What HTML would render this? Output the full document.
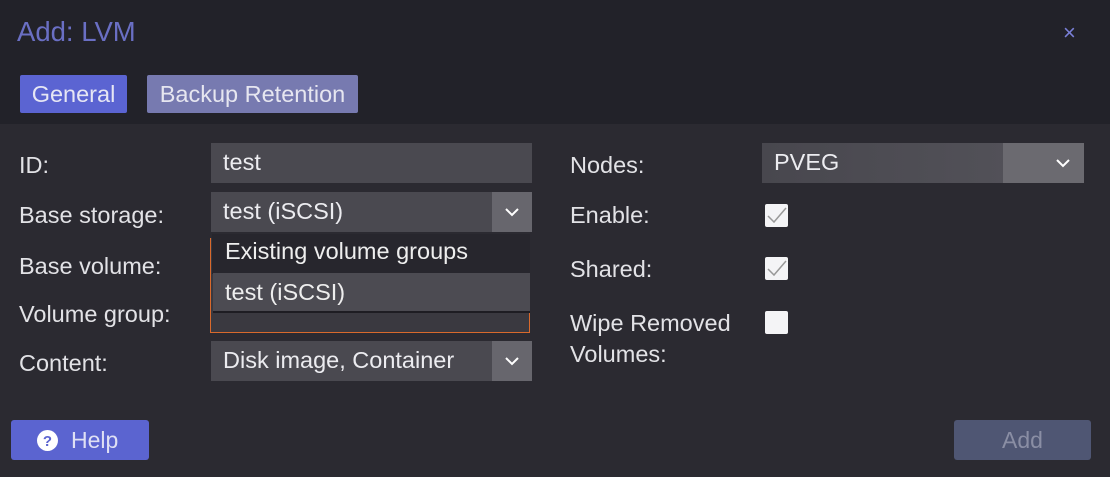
<!DOCTYPE html>
<html><head><style>
body{margin:0;width:1110px;height:477px;background:#2b2a31;font-family:"Liberation Sans",sans-serif;position:relative;overflow:hidden;color:#ddd}
.a{position:absolute}
.hdr{left:0;top:0;width:1110px;height:124px;background:#222229}
.lbl{font-size:23.5px;color:#e2e2e6}
.inp{background:#4a4950;height:40px;font-size:23.5px;color:#ececf0;box-sizing:border-box;padding:6px 12px}
.trig{background:#67666d;width:40px;height:40px}
.cb{width:23px;height:23px;background:#f4f4f6;border-radius:2px}
</style></head><body>
<div class="a hdr"></div>
<div class="a" style="left:17px;top:16px;font-size:27.5px;color:#6a6fc4">Add: LVM</div>
<div class="a" style="left:1063px;top:20px;font-size:22px;color:#7a80d8">×</div>
<div class="a" style="left:20px;top:75px;width:107px;height:38px;background:#5b64d2;border-radius:2px;font-size:23.5px;color:#e6e6f4;text-align:center;line-height:38px">General</div>
<div class="a" style="left:147px;top:75px;width:211px;height:38px;background:#777ab0;border-radius:2px;font-size:23.5px;color:#e6e6f0;text-align:center;line-height:38px">Backup Retention</div>

<div class="a lbl" style="left:19px;top:152px">ID:</div>
<div class="a lbl" style="left:19px;top:202px">Base storage:</div>
<div class="a lbl" style="left:19px;top:253px">Base volume:</div>
<div class="a lbl" style="left:19px;top:301px">Volume group:</div>
<div class="a lbl" style="left:19px;top:350px">Content:</div>

<div class="a inp" style="left:211px;top:143px;width:321px">test</div>
<div class="a inp" style="left:211px;top:192px;width:321px">test (iSCSI)</div>
<div class="a trig" style="left:492px;top:192px"></div>
<svg class="a" style="left:503px;top:205px" width="18" height="14"><path d="M3 4 L9 10 L15 4" stroke="#fff" stroke-width="2" fill="none"/></svg>

<div class="a" style="left:210px;top:238px;width:320px;height:95px;border:1px solid #d8692c;border-top:none;box-sizing:border-box;background:#3a3940"></div>
<div class="a" style="left:212px;top:234px;width:318px;height:40px;background:#27262d;font-size:23.5px;color:#eee;padding:4px 13px;box-sizing:border-box">Existing volume groups</div>
<div class="a" style="left:213px;top:273px;width:317px;height:40px;background:#4c4b52;font-size:23.5px;color:#eee;padding:6px 12px;box-sizing:border-box;border-bottom:2px solid #1e1d23">test (iSCSI)</div>

<div class="a inp" style="left:211px;top:341px;width:321px">Disk image, Container</div>
<div class="a trig" style="left:492px;top:341px"></div>
<svg class="a" style="left:503px;top:354px" width="18" height="14"><path d="M3 4 L9 10 L15 4" stroke="#fff" stroke-width="2" fill="none"/></svg>

<div class="a lbl" style="left:570px;top:152px">Nodes:</div>
<div class="a lbl" style="left:570px;top:202px">Enable:</div>
<div class="a lbl" style="left:570px;top:256px">Shared:</div>
<div class="a lbl" style="left:570px;top:308px;line-height:31px">Wipe Removed<br>Volumes:</div>
<div class="a inp" style="left:762px;top:143px;width:322px;background:linear-gradient(90deg,#48474e,#55545b)">PVEG</div>
<div class="a" style="left:1003px;top:143px;width:81px;height:40px;background:#6b6a70"></div>
<svg class="a" style="left:1054px;top:156px" width="18" height="14"><path d="M3 4 L9 10 L15 4" stroke="#fff" stroke-width="2" fill="none"/></svg>

<div class="a cb" style="left:765px;top:204px"></div>
<svg class="a" style="left:765px;top:204px" width="23" height="23"><path d="M3 12 L9 18 L21 4" stroke="#999" stroke-width="1.5" fill="none"/></svg>
<div class="a cb" style="left:765px;top:257px"></div>
<svg class="a" style="left:765px;top:257px" width="23" height="23"><path d="M3 12 L9 18 L21 4" stroke="#999" stroke-width="1.5" fill="none"/></svg>
<div class="a cb" style="left:765px;top:311px"></div>

<div class="a" style="left:11px;top:420px;width:138px;height:40px;background:#5b64d0;border-radius:3px"></div>
<svg class="a" style="left:36px;top:429px" width="23" height="23"><circle cx="11.5" cy="11.5" r="10.5" fill="#fff"/><text x="11.5" y="17" font-size="15" font-weight="bold" text-anchor="middle" fill="#5b64d0" font-family="Liberation Sans">?</text></svg>
<div class="a" style="left:71px;top:427px;font-size:23px;color:#dfe0f4">Help</div>
<div class="a" style="left:954px;top:420px;width:137px;height:40px;background:#4f5673;border-radius:3px;text-align:center;line-height:40px;font-size:23px;color:#8a8ea4">Add</div>
</body></html>
